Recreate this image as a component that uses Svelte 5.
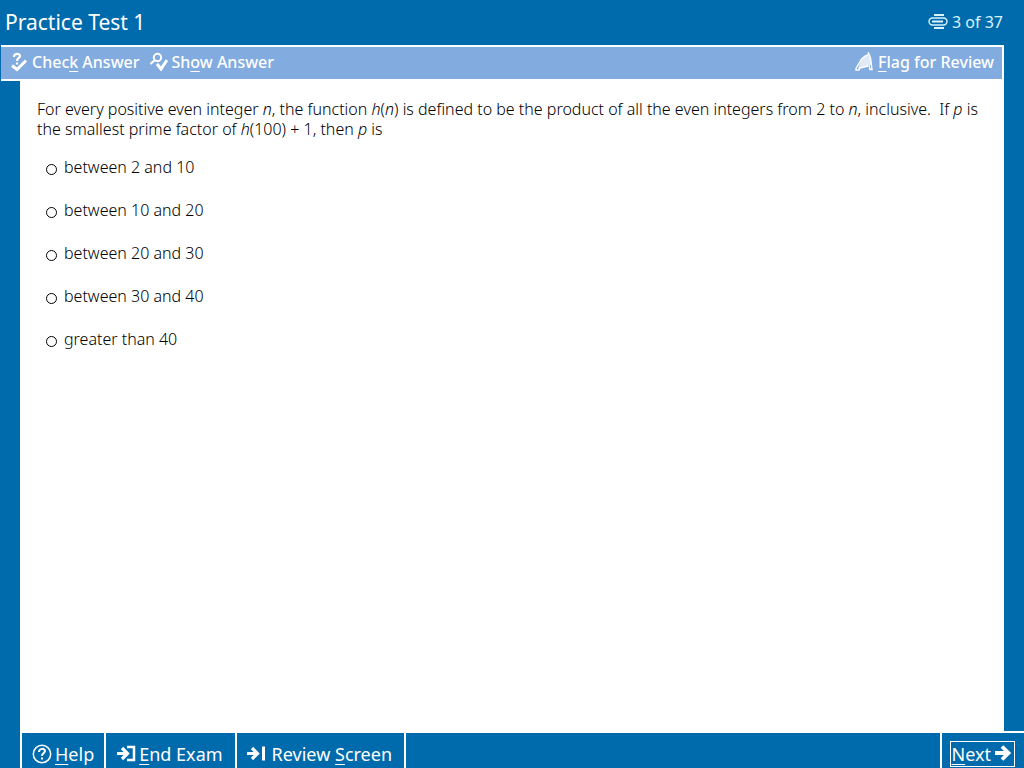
<script>
  let selected = $state("");

  const choices = [
    "between 2 and 10",
    "between 10 and 20",
    "between 20 and 30",
    "between 30 and 40",
    "greater than 40",
  ];
</script>

<div class="exam">
  <header class="title-bar">
    <h1>Practice Test 1</h1>
    <div class="progress">
      <svg width="20" height="16" viewBox="0 0 20 16" fill="none" stroke="currentColor">
        <path d="M6 1h10M6 14h10" stroke-width="2" />
        <rect x="1" y="4" width="18" height="7" rx="3.5" stroke-width="1.4" />
        <path d="M4 7.5h11" stroke-width="2" />
      </svg>
      <span>3 of 37</span>
    </div>
  </header>

  <div class="toolbar">
    <button type="button">
      <svg width="18" height="20" viewBox="0 0 18 20" fill="none" stroke="currentColor">
        <path d="M3 5c0-4 6-4 6-1 0 2-3 2-3 5M6 10.5v2" stroke-width="2.2" />
        <path d="M1 13.500l5 4 9-9" stroke-width="3" />
      </svg>
      <span>Chec<u>k</u> Answer</span>
    </button>
    <button type="button">
      <svg width="18" height="20" viewBox="0 0 18 20" fill="none" stroke="currentColor">
        <circle cx="7.500" cy="5.500" r="3.700" stroke-width="2" />
        <path d="M5 8l-4.500 4" stroke-width="2" />
        <path d="M7 12l4 5 6-9" stroke-width="3" />
      </svg>
      <span>Sh<u>o</u>w Answer</span>
    </button>
    <button type="button" class="flag">
      <svg width="19" height="20" viewBox="0 0 19 20" fill="none" stroke="currentColor">
        <path d="M6 7l4-3 3-1 3 4 0 6-3 1-4 1-6 2z" fill="currentColor" fill-opacity="0.75" stroke="none" />
        <path d="M6.500 7l3.500-3 3-1 .5-2 2 5 1.500 11.500h-2l-1-4" stroke-width="1.400" />
        <path d="M6.500 7L1 16.500v1.500h3l1-2 8-2" stroke-width="1.400" />
      </svg>
      <span><u>F</u>lag for Review</span>
    </button>
  </div>

  <main class="question">
    <p id="prompt">
      For every positive even integer <i>n</i>, the function <i>h</i>(<i>n</i>) is defined to be the
      product of all the even integers from 2 to <i>n</i>, inclusive.&nbsp; If <i>p</i> is the
      smallest prime factor of <i>h</i>(100) + 1, then <i>p</i> is
    </p>
    <div class="choices" role="radiogroup" aria-labelledby="prompt">
      {#each choices as choice}
        <label>
          <input type="radio" name="answer" value={choice} bind:group={selected} />
          <span>{choice}</span>
        </label>
      {/each}
    </div>
  </main>

  <footer class="nav-bar">
    <button type="button">
      <svg width="20" height="20" viewBox="0 0 20 20" fill="none" stroke="currentColor">
        <circle cx="10" cy="10" r="8.700" stroke-width="1.500" />
        <path d="M7 8c0-4 6-4 6-1 0 2-3 2-3 5M10 13.500v2" stroke-width="2" />
      </svg>
      <span><u>H</u>elp</span>
    </button>
    <button type="button">
      <svg width="20" height="20" viewBox="0 0 20 20" fill="none" stroke="currentColor">
        <path d="M1 9.500h11M6 4l5.500 5.500-5.500 5.500" stroke-width="3.200" />
        <path d="M11 3h7v13h-7" stroke-width="2.500" />
      </svg>
      <span><u>E</u>nd Exam</span>
    </button>
    <button type="button" class="review">
      <svg width="20" height="20" viewBox="0 0 20 20" fill="none" stroke="currentColor">
        <path d="M0 9.500h10M5 4l5.500 5.500-5.500 5.500" stroke-width="3.200" />
        <path d="M16.500 2.500v14" stroke-width="3" />
      </svg>
      <span>Review <u>S</u>creen</span>
    </button>
    <div class="next">
      <button type="button">
        <span><u>N</u>ext</span>
        <svg width="18" height="20" viewBox="0 0 18 20" fill="none" stroke="currentColor">
          <path d="M1 9h13M8 2.500l6.500 6.500-6.500 6.500" stroke-width="3.800" />
        </svg>
      </button>
    </div>
  </footer>
</div>

<style>
  :global(body) {
    margin: 0;
  }

  .exam {
    display: flex;
    flex-direction: column;
    height: 100vh;
    overflow: hidden;
    background: #006bac;
    color: #fff;
    font-family: "Noto Sans", "Open Sans", sans-serif;
    font-size: 16px;
  }

  button {
    display: flex;
    align-items: center;
    padding: 0;
    border: 0;
    background: none;
    color: inherit;
    font: inherit;
    white-space: nowrap;
    cursor: pointer;
  }

  svg {
    flex: none;
  }

  u {
    text-decoration-thickness: 1px;
    text-underline-offset: 3px;
    text-decoration-skip-ink: none;
  }

  .title-bar {
    display: flex;
    align-items: center;
    justify-content: space-between;
    flex: none;
    height: 44px;
    padding: 0 21px 1px 5px;
  }

  h1 {
    margin: 0;
    font-size: 21px;
    font-weight: 400;
    line-height: 28px;
  }

  .progress {
    display: flex;
    align-items: center;
    gap: 4px;
    color: #d8f2ff;
    line-height: 20px;
  }

  .toolbar {
    display: flex;
    align-items: stretch;
    flex: none;
    gap: 10px;
    height: 32px;
    margin: 0 20px 0 1px;
    padding: 0 8px 0 10px;
    border: 2px solid #fff;
    border-left: 0;
    background: #82abdf;
    font-size: 16px;
    font-weight: 500;
  }

  .toolbar button {
    gap: 3px;
    padding-bottom: 2px;
  }

  .toolbar button + button {
    gap: 4px;
  }

  .toolbar .flag {
    margin-left: auto;
  }

  .question {
    flex: 1;
    margin: 0 20px;
    padding: 18px 16px;
    background: #fff;
    color: #000;
    font-weight: 300;
  }

  .question p {
    margin: 0;
    padding-left: 1px;
    line-height: 20px;
  }

  .choices {
    display: flex;
    flex-direction: column;
    align-items: flex-start;
    gap: 19px;
    padding: 16px 10px;
  }

  label {
    display: flex;
    align-items: center;
    gap: 7px;
    line-height: 24px;
  }

  input {
    appearance: none;
    box-sizing: border-box;
    width: 11px;
    height: 11px;
    margin: 4px 0 0;
    border: 1px solid #000;
    border-radius: 50%;
  }

  input:checked {
    background: radial-gradient(#000 40%, #fff 50%);
  }

  .nav-bar {
    display: flex;
    flex: none;
    height: 35px;
    margin-left: 20px;
    border-top: 2px solid #fff;
    font-size: 18px;
  }

  .nav-bar > button {
    gap: 3px;
    padding: 6px 10px 0;
    border-left: 2px solid #fff;
  }

  .nav-bar > button + button {
    padding-right: 12px;
  }

  .nav-bar > .review {
    gap: 5px;
    border-right: 2px solid #fff;
  }

  .next {
    display: flex;
    align-items: center;
    margin-left: auto;
    padding: 6px 9px 0 8px;
    border-left: 2px solid #fff;
  }

  .next button {
    gap: 3px;
    height: 26px;
    padding: 0 2px 0 1px;
    border: 1px solid #fff;
  }
</style>
